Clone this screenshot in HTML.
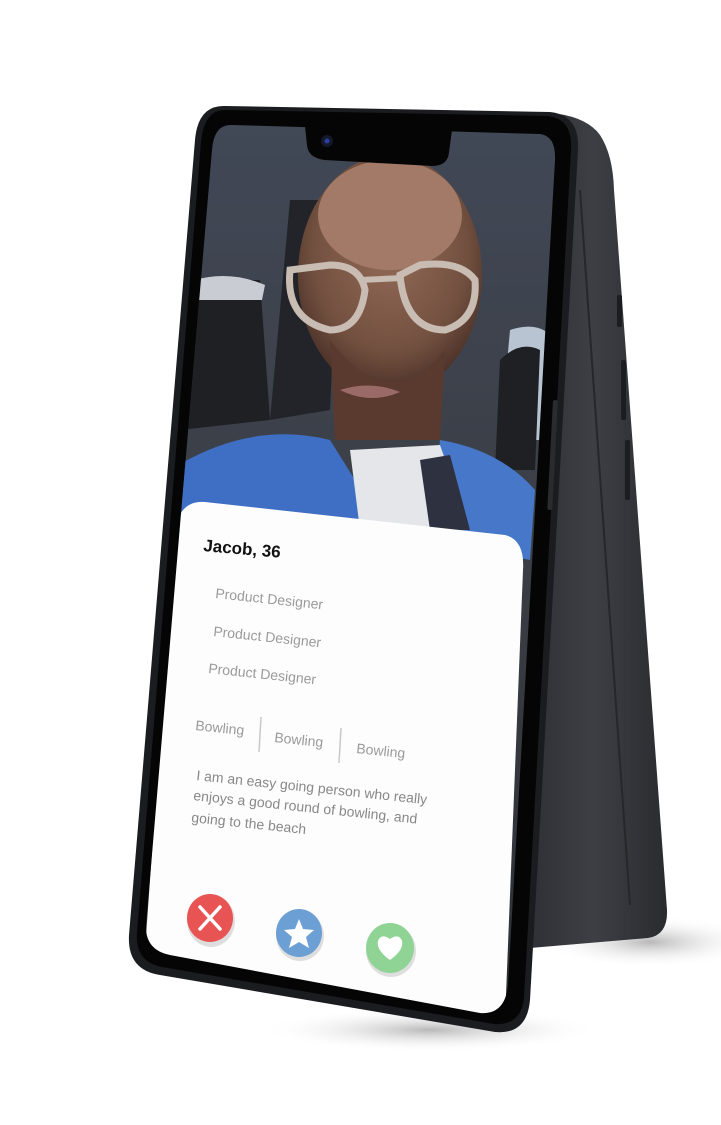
<!DOCTYPE html>
<html><head><meta charset="utf-8"><style>
html,body{margin:0;padding:0;background:#fff;width:721px;height:1125px;overflow:hidden}
svg{display:block}
text{font-family:"Liberation Sans",sans-serif}
</style></head><body>
<svg width="721" height="1125" viewBox="0 0 721 1125" xmlns="http://www.w3.org/2000/svg">
<defs>
<radialGradient id="shadow" cx="0.5" cy="0.5" r="0.5">
<stop offset="0" stop-color="#9a9a9a" stop-opacity="0.7"/><stop offset="1" stop-color="#fff" stop-opacity="0"/></radialGradient>
<linearGradient id="back" x1="0" y1="0" x2="1" y2="0">
<stop offset="0" stop-color="#2c2e33"/><stop offset="0.5" stop-color="#3d3f45"/><stop offset="1" stop-color="#2a2b2f"/></linearGradient>
<linearGradient id="bg" x1="0" y1="0" x2="0" y2="1">
<stop offset="0" stop-color="#414856"/><stop offset="0.5" stop-color="#3a3d44"/><stop offset="1" stop-color="#2c2f36"/></linearGradient>
<radialGradient id="face" cx="0.5" cy="0.4" r="0.6">
<stop offset="0" stop-color="#946a58"/><stop offset="0.7" stop-color="#72503f"/><stop offset="1" stop-color="#4a3028"/></radialGradient>
<clipPath id="scr"><path d="M232 125 L540 134 Q556 136 555 160 L508 985 Q505 1015 480 1013 L170 955 Q145 950 146 925 L212 150 Q214 124 232 125 Z"/></clipPath>
</defs>
<ellipse cx="650" cy="942" rx="110" ry="26" fill="url(#shadow)"/>
<ellipse cx="430" cy="1030" rx="170" ry="22" fill="url(#shadow)"/>
<!-- back panel -->
<path d="M540 112 Q585 114 600 135 Q613 155 614 190 L667 910 Q668 935 648 938 L530 948 L520 200 Z" fill="url(#back)"/>
<path d="M580 190 L630 905" stroke="#26272b" stroke-width="2"/>
<rect x="617" y="295" width="5" height="32" rx="2" fill="#1c1d20"/>
<rect x="621" y="360" width="5" height="60" rx="2" fill="#1c1d20"/>
<rect x="625" y="440" width="5" height="60" rx="2" fill="#1c1d20"/>
<!-- front body -->
<path d="M225 106 L550 112 Q580 115 578 150 L530 1000 Q527 1035 495 1032 L160 975 Q127 970 129 935 L195 140 Q198 105 225 106 Z" fill="#1b1c1f"/>
<path d="M225 110 L548 116 Q573 119 571 150 L524 998 Q521 1026 494 1024 L162 967 Q135 962 137 933 L201 142 Q204 110 225 110 Z" fill="#050505"/>
<rect x="553" y="400" width="5" height="110" rx="2" fill="#2a2b2f" transform="rotate(3 553 400)"/>
<!-- screen -->
<g clip-path="url(#scr)">
<rect x="140" y="120" width="420" height="900" fill="url(#bg)"/>
<path d="M190 280 L260 280 L270 420 L180 430 Z" fill="#1f2024"/>
<path d="M195 280 Q230 270 265 285 L262 300 L195 300 Z" fill="#c9ccd2"/>
<path d="M510 330 Q540 320 555 340 L550 440 L500 440 Z" fill="#b8c4d2"/>
<path d="M500 360 Q520 340 540 350 L535 470 L495 470 Z" fill="#1e2024"/>
<path d="M290 200 L340 200 L330 410 L270 420 Z" fill="#22242a"/>
<ellipse cx="390" cy="275" rx="92" ry="120" fill="url(#face)"/>
<ellipse cx="390" cy="215" rx="72" ry="55" fill="#a37a68"/>
<path d="M330 340 Q390 420 445 350 L440 440 L335 440 Z" fill="#5a3a2e"/>
<path d="M290 270 Q285 320 330 330 Q360 330 365 290 Q360 265 330 265 Z" fill="none" stroke="#c9bdb3" stroke-width="7"/>
<path d="M400 275 Q405 330 445 330 Q478 320 475 280 Q460 260 420 265 Z" fill="none" stroke="#c9bdb3" stroke-width="7"/>
<path d="M360 280 L402 278" stroke="#c9bdb3" stroke-width="6"/>
<path d="M340 390 Q370 380 400 392 Q370 405 340 390 Z" fill="#9a6a68"/>
<path d="M170 470 Q250 420 330 440 L380 520 L170 540 Z" fill="#3f6fc4"/>
<path d="M440 440 Q500 450 535 490 L530 560 L430 540 Z" fill="#4677c8"/>
<path d="M350 450 L440 445 L470 530 L360 530 Z" fill="#e4e6ea"/>
<path d="M420 460 L450 455 L470 530 L430 530 Z" fill="#2d3140"/>
<!-- card -->
<path d="M205 502 L505 535 Q525 540 523 570 L505 1020 L140 1020 L175 530 Q180 500 205 502 Z" fill="#fdfdfd"/>
</g>
<!-- notch -->
<path d="M305 126 L452 130 L449 152 Q448 166 432 166 L325 160 Q308 158 307 145 Z" fill="#050505"/>
<circle cx="327" cy="141" r="6" fill="#14182a"/><circle cx="327" cy="141" r="2.5" fill="#2c3fa0"/>
<!-- text -->
<text x="203" y="551" font-size="17" font-weight="bold" fill="#111" transform="rotate(5 203 551)">Jacob, 36</text>
<g fill="#9a9a9a" font-size="14">
<text x="215" y="598" transform="rotate(6 215 598)">Product Designer</text>
<text x="213" y="636" transform="rotate(6 213 636)">Product Designer</text>
<text x="208" y="673" transform="rotate(6 208 673)">Product Designer</text>
<text x="195" y="730" transform="rotate(6 195 730)">Bowling</text>
<text x="274" y="742" transform="rotate(6 274 742)">Bowling</text>
<text x="356" y="753" transform="rotate(6 356 753)">Bowling</text>
</g>
<path d="M261 717 L259 752 M341 728 L339 763" stroke="#c8c8c8" stroke-width="1.5"/>
<g fill="#888" font-size="14">
<text x="196" y="780" transform="rotate(6 196 780)">I am an easy going person who really</text>
<text x="193" y="800" transform="rotate(6 193 800)">enjoys a good round of bowling, and</text>
<text x="191" y="822" transform="rotate(6 191 822)">going to the beach</text>
</g>
<!-- buttons -->
<ellipse cx="211" cy="921" rx="24" ry="26" fill="#000" opacity="0.12"/>
<ellipse cx="210" cy="918" rx="23" ry="24" fill="#e85454"/>
<path d="M200 907 L220 929 M220 907 L200 929" stroke="#fff" stroke-width="3.5" stroke-linecap="round"/>
<ellipse cx="300" cy="936" rx="24" ry="25" fill="#000" opacity="0.12"/>
<ellipse cx="299" cy="933" rx="23" ry="24" fill="#6c9fd3"/>
<path d="M299 919 L303 929 L314 930 L306 937 L309 948 L299 942 L289 948 L292 937 L284 930 L295 929 Z" fill="#fff"/>
<ellipse cx="391" cy="951" rx="25" ry="26" fill="#000" opacity="0.12"/>
<ellipse cx="390" cy="948" rx="24" ry="25" fill="#8fd494"/>
<path d="M390 960 Q376 950 378 941 Q381 933 390 939 Q399 933 402 941 Q404 950 390 960 Z" fill="#fff"/>
</svg>
</body></html>
